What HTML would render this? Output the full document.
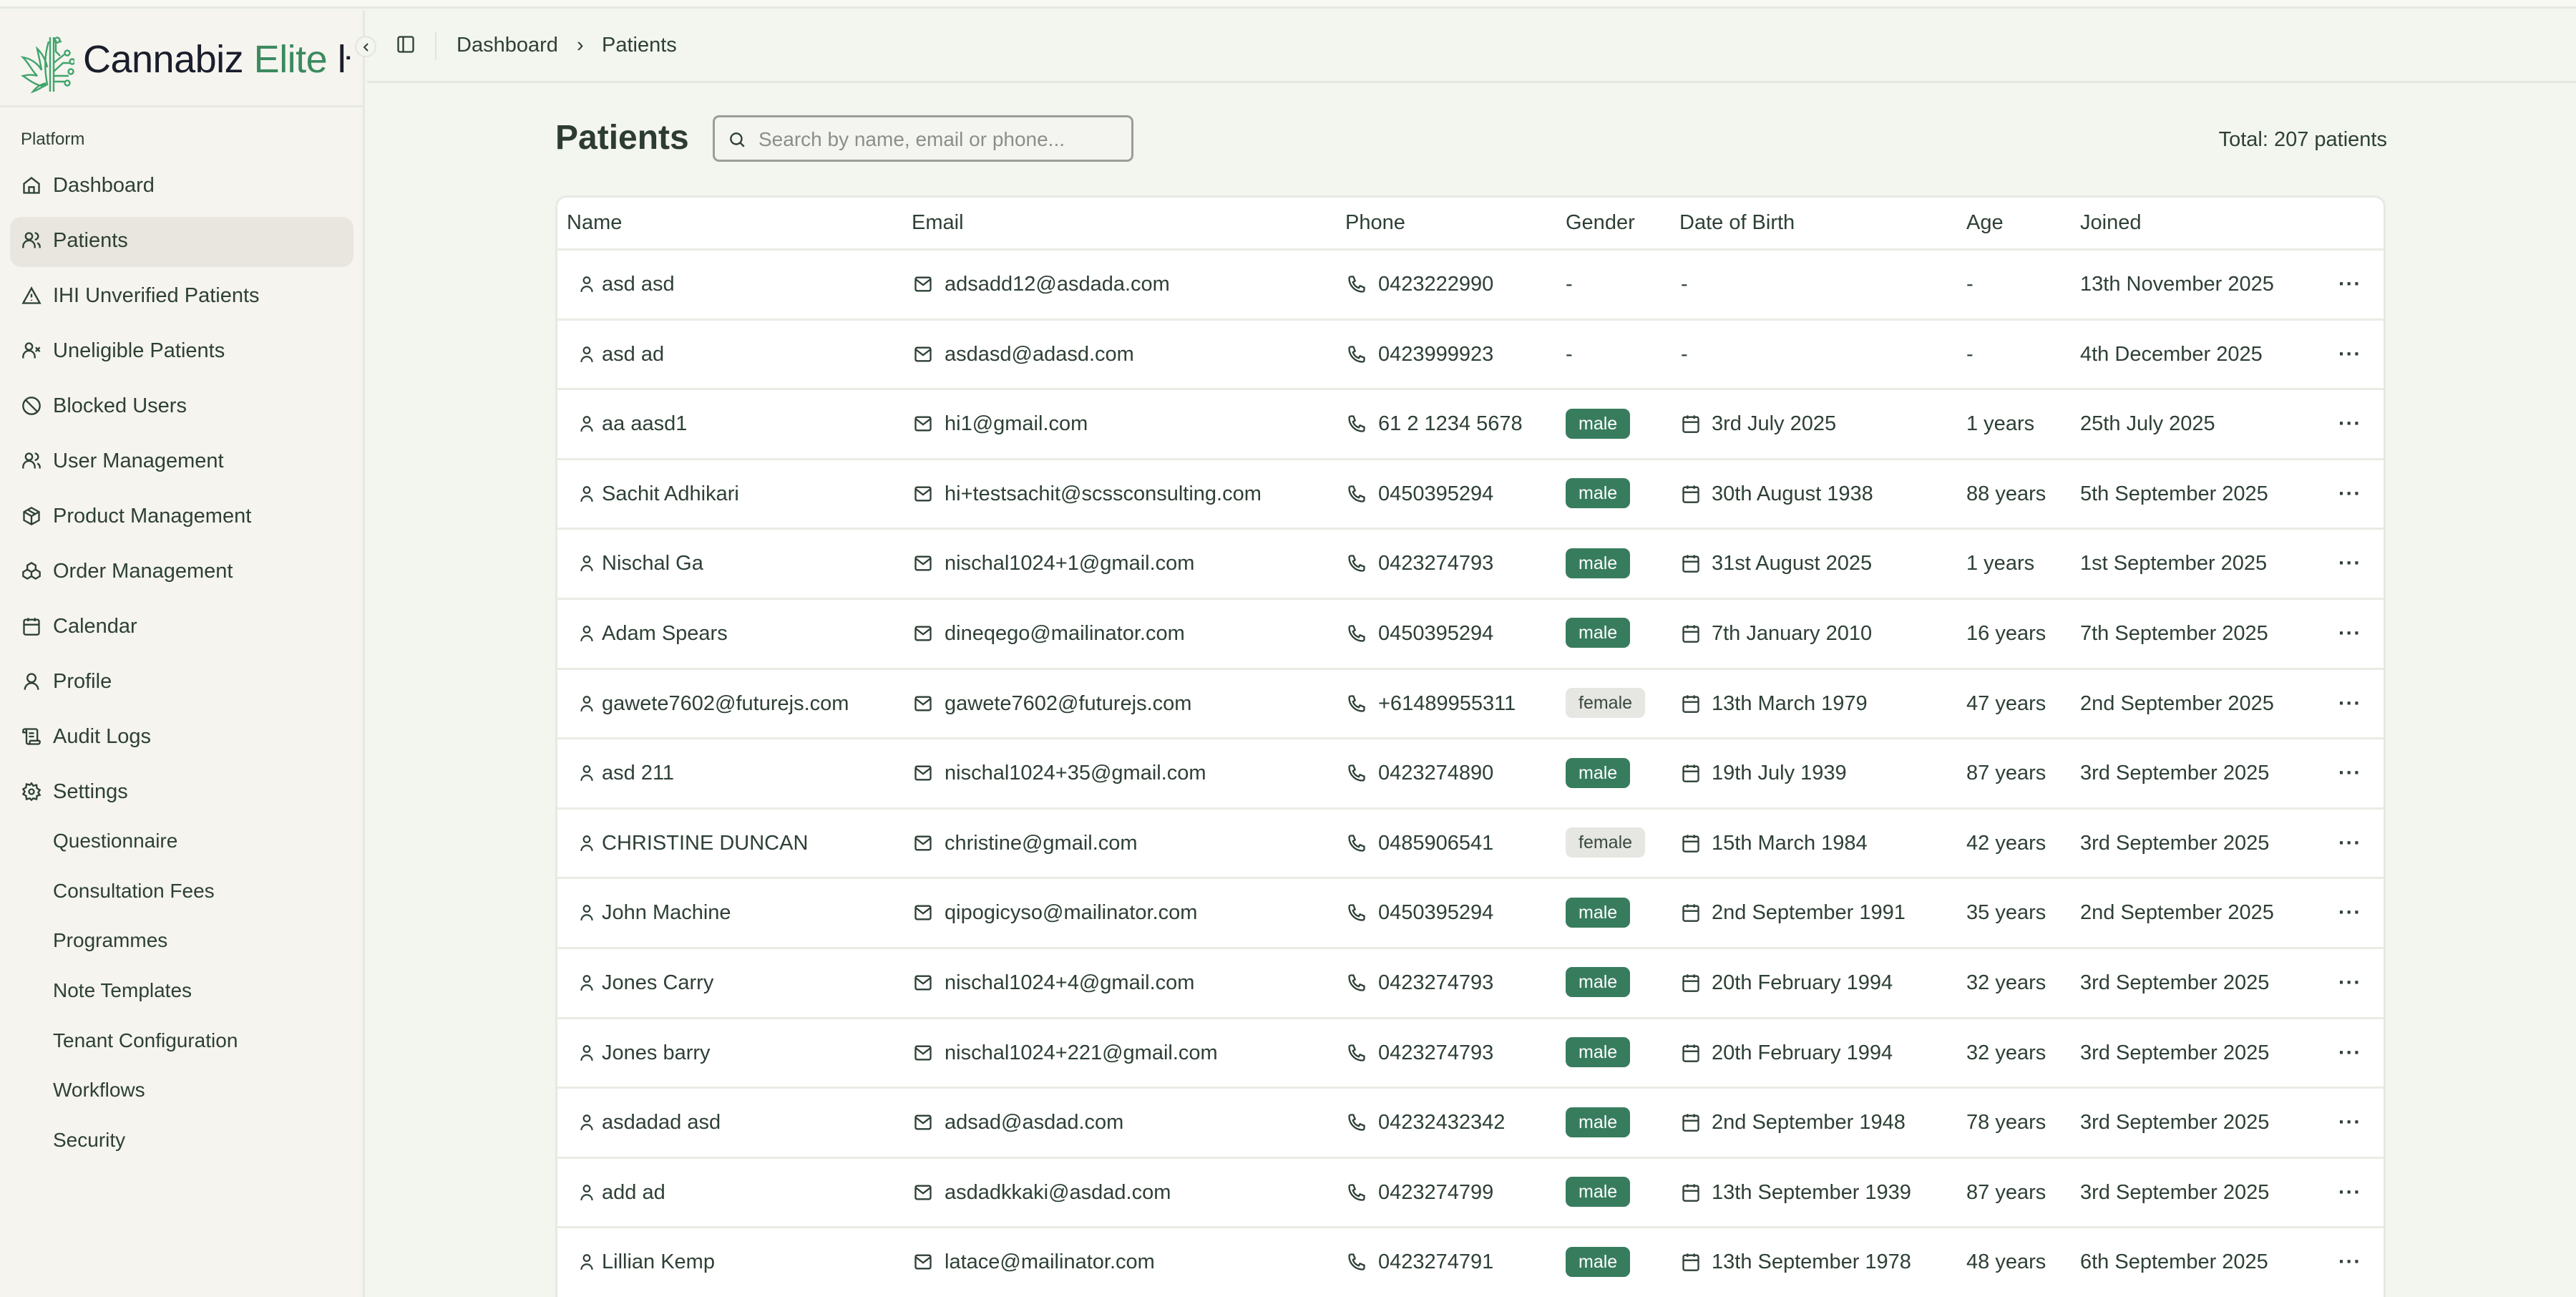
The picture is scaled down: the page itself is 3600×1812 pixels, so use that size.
<!DOCTYPE html>
<html><head><meta charset="utf-8">
<style>
*{box-sizing:border-box;margin:0;padding:0}
html,body{width:3600px;height:1812px;overflow:hidden}
body{background:#f3f5ef;font-family:"Liberation Sans",sans-serif;color:#2e4035;position:relative}
.topstrip{position:absolute;left:0;top:0;width:3600px;height:12px;background:#f7f8f2;border-bottom:3px solid #e6e8e1}
.side{position:absolute;left:0;top:14px;width:510px;height:1798px;background:#f5f4ef;border-right:3px solid #e7e8e2}
.logo{position:absolute;left:28px;top:34px}
.brand{position:absolute;left:116px;top:38px;font-size:54px;color:#1a1d2b;white-space:nowrap;letter-spacing:-0.5px}
.brand span{color:#3b8a5e}
.sdiv{position:absolute;left:0;top:133px;width:510px;height:3px;background:#e7e8e2}
.plat{position:absolute;left:29px;top:167px;font-size:24px}
.nav{position:absolute;left:0;width:510px;font-size:29px;height:66px;line-height:66px}
.nav svg{position:absolute;left:30px;top:19px}
.nav .t{position:absolute;left:74px}
.act{position:absolute;left:14px;top:289px;width:480px;height:70px;background:#e8e6de;border-radius:16px}
.sub{position:absolute;left:74px;font-size:28px}
.collapse{position:absolute;left:496px;top:50px;width:30px;height:30px;border-radius:50%;border:2px solid #e3e5de;background:#f5f5f0}
.hdr{position:absolute;left:513px;top:14px;width:3087px;height:102px;border-bottom:3px solid #e7e8e2}
.bc{position:absolute;top:33px;font-size:29px}
.title{position:absolute;left:776px;top:165px;font-size:48px;font-weight:bold;color:#2d3c32}
.search{position:absolute;left:996px;top:161px;width:588px;height:65px;border:3px solid #9a9d98;border-radius:9px;background:#f4f5f0}
.search span{position:absolute;left:61px;top:15px;font-size:28px;color:#8b8f8a}
.total{position:absolute;right:264px;top:179px;font-size:29px}
.tbl{position:absolute;left:776px;top:273px;width:2558px;height:1560px;background:#fff;border:3px solid #e8e9e3;border-radius:16px;overflow:hidden}
.row{position:absolute;left:0;width:2558px;height:97.6px;border-top:3px solid #ebebe6}
.c{position:absolute;top:0;height:97.6px;line-height:94px;font-size:29px;white-space:nowrap}
.c svg{position:absolute;top:33px;left:0}
.hd .c{line-height:70px}
.b{display:inline-block;height:42px;line-height:42px;padding:0 18px;border-radius:9px;font-size:25px;vertical-align:middle;margin-top:-4px}
.m{background:#387c5e;color:#fff}
.f{background:#e6e6e2;color:#3a4a40}
</style></head><body>
<div class="topstrip"></div>
<div class="side">
<svg class="logo" width="76" height="84" viewBox="0 0 76 84" fill="none" stroke="#41a46c" stroke-width="2.4">
<path d="M42 4 L42 80 M47 4 L47 80"/>
<path d="M40 10 C34 30 34 48 38 70 L30 72 C20 70 10 62 4 58 C12 56 18 56 24 58 C16 50 12 40 4 32 C16 34 26 42 30 50 C28 38 26 30 24 20 C32 28 36 36 38 46"/>
<path d="M38 70 C30 74 24 78 18 80 C24 72 30 70 36 68"/>
<path d="M50 8 V24 L56 30 M58 10 H54"/>
<circle cx="52" cy="8" r="3.5"/><circle cx="66" cy="26" r="3.5"/><circle cx="73" cy="38" r="3.5"/><circle cx="71" cy="52" r="3.5"/><circle cx="66" cy="68" r="3.5"/>
<path d="M47 40 L62 28 M47 52 L60 40 H70 M47 58 H68 M47 66 H62"/>
</svg>
<div class="brand">Cannabiz <span>Elite</span> <span style="color:#1a1d2b">ŀ</span></div>
<div class="sdiv"></div>
<div class="plat">Platform</div>
<div class="act"></div>
<div class="nav" style="top:212px"><svg width="28" height="28" viewBox="0 0 24 24" fill="none" stroke="#2e4035" stroke-width="2"><path d="M3 10 L12 3 L21 10 V21 H3 Z M9 21 V14 H15 V21"/></svg><span class="t">Dashboard</span></div>
<div class="nav" style="top:289px"><svg width="28" height="28" viewBox="0 0 24 24" fill="none" stroke="#2e4035" stroke-width="2"><circle cx="9" cy="7" r="4"/><path d="M2 21 V19 A5 5 0 0 1 16 19 V21 M16 3 A4 4 0 0 1 16 11 M22 21 V19 A5 5 0 0 0 19 15"/></svg><span class="t">Patients</span></div>
<div class="nav" style="top:366px"><svg width="28" height="28" viewBox="0 0 24 24" fill="none" stroke="#2e4035" stroke-width="2"><path d="M12 3 L22 21 H2 Z M12 10 V14 M12 17 V18"/></svg><span class="t">IHI Unverified Patients</span></div>
<div class="nav" style="top:443px"><svg width="28" height="28" viewBox="0 0 24 24" fill="none" stroke="#2e4035" stroke-width="2"><circle cx="9" cy="7" r="4"/><path d="M2 21 V19 A5 5 0 0 1 16 19 V21 M17 8 L22 13 M22 8 L17 13"/></svg><span class="t">Uneligible Patients</span></div>
<div class="nav" style="top:520px"><svg width="28" height="28" viewBox="0 0 24 24" fill="none" stroke="#2e4035" stroke-width="2"><circle cx="12" cy="12" r="10"/><path d="M5 5 L19 19"/></svg><span class="t">Blocked Users</span></div>
<div class="nav" style="top:597px"><svg width="28" height="28" viewBox="0 0 24 24" fill="none" stroke="#2e4035" stroke-width="2"><circle cx="9" cy="7" r="4"/><path d="M2 21 V19 A5 5 0 0 1 16 19 V21 M16 3 A4 4 0 0 1 16 11 M22 21 V19 A5 5 0 0 0 19 15"/></svg><span class="t">User Management</span></div>
<div class="nav" style="top:674px"><svg width="28" height="28" viewBox="0 0 24 24" fill="none" stroke="#2e4035" stroke-width="2"><path d="M12 2 L21 7 V17 L12 22 L3 17 V7 Z M3 7 L12 12 L21 7 M12 12 V22 M7.5 4.5 L16.5 9.5"/></svg><span class="t">Product Management</span></div>
<div class="nav" style="top:751px"><svg width="28" height="28" viewBox="0 0 24 24" fill="none" stroke="#2e4035" stroke-width="2"><path d="M12 2 L17 5 V10 L12 13 L7 10 V5 Z M7 10 L2 13 V18 L7 21 L12 18 V13 M17 10 L22 13 V18 L17 21 L12 18"/></svg><span class="t">Order Management</span></div>
<div class="nav" style="top:828px"><svg width="28" height="28" viewBox="0 0 24 24" fill="none" stroke="#2e4035" stroke-width="2"><rect x="3" y="4" width="18" height="18" rx="2"/><path d="M3 10 H21 M8 2 V6 M16 2 V6"/></svg><span class="t">Calendar</span></div>
<div class="nav" style="top:905px"><svg width="28" height="28" viewBox="0 0 24 24" fill="none" stroke="#2e4035" stroke-width="2"><circle cx="12" cy="8" r="5"/><path d="M4 22 A8 8 0 0 1 20 22"/></svg><span class="t">Profile</span></div>
<div class="nav" style="top:982px"><svg width="28" height="28" viewBox="0 0 24 24" fill="none" stroke="#2e4035" stroke-width="2"><path d="M15 12 H9 M15 8 H9 M19 17 V5 A2 2 0 0 0 17 3 H4 M8 21 H20 A2 2 0 0 0 22 19 V18 A1 1 0 0 0 21 17 H11 A1 1 0 0 0 10 18 V19 A2 2 0 1 1 6 19 V5 A2 2 0 1 0 2 5 V7 H6"/></svg><span class="t">Audit Logs</span></div>
<div class="nav" style="top:1059px"><svg width="28" height="28" viewBox="0 0 24 24" fill="none" stroke="#2e4035" stroke-width="2"><circle cx="12" cy="12" r="3"/><path d="M12 2 L14 5 L18 4 L18.5 8 L22 10 L20 13 L22 16 L18.5 17 L18 21 L14 20 L12 22 L10 20 L6 21 L5.5 17 L2 15 L4 12 L2 9 L5.5 7 L6 3 L10 4 Z"/></svg><span class="t">Settings</span></div>
<div class="sub" style="top:1145px">Questionnaire</div>
<div class="sub" style="top:1215px">Consultation Fees</div>
<div class="sub" style="top:1284px">Programmes</div>
<div class="sub" style="top:1354px">Note Templates</div>
<div class="sub" style="top:1424px">Tenant Configuration</div>
<div class="sub" style="top:1493px">Workflows</div>
<div class="sub" style="top:1563px">Security</div>
</div>
<div class="hdr">
<svg style="position:absolute;left:40px;top:34px" width="28" height="28" viewBox="0 0 24 24" fill="none" stroke="#2e4035" stroke-width="2"><rect x="3" y="3" width="18" height="18" rx="2"/><path d="M9 3 V21"/></svg>
<div style="position:absolute;left:95px;top:30px;width:2px;height:40px;background:#e2e4dd"></div>
<div class="bc" style="left:125px">Dashboard</div>
<div class="bc" style="left:293px">›</div>
<div class="bc" style="left:328px">Patients</div>
</div>
<div class="collapse"><svg style="position:absolute;left:7px;top:6px" width="14" height="16" viewBox="0 0 14 16" fill="none" stroke="#2e4035" stroke-width="2"><path d="M9 3 L4 8 L9 13"/></svg></div>
<div class="title">Patients</div>
<div class="search"><svg style="position:absolute;left:18px;top:18px" width="26" height="26" viewBox="0 0 24 24" fill="none" stroke="#2e4035" stroke-width="2.2"><circle cx="11" cy="11" r="7"/><path d="M16 16 L21 21"/></svg><span>Search by name, email or phone...</span></div>
<div class="total">Total: 207 patients</div>
<div class="tbl" id="t">
<div class="hd" style="position:absolute;top:0;height:74px;width:100%">
<div class="c" style="left:13px">Name</div><div class="c" style="left:495px">Email</div><div class="c" style="left:1101px">Phone</div><div class="c" style="left:1409px">Gender</div><div class="c" style="left:1568px">Date of Birth</div><div class="c" style="left:1969px">Age</div><div class="c" style="left:2128px">Joined</div>
</div>
</div>
<script>
var d=[["asd asd","adsadd12@asdada.com","0423222990","","-","-","13th November 2025"],
["asd ad","asdasd@adasd.com","0423999923","","-","-","4th December 2025"],
["aa aasd1","hi1@gmail.com","61 2 1234 5678","male","3rd July 2025","1 years","25th July 2025"],
["Sachit Adhikari","hi+testsachit@scssconsulting.com","0450395294","male","30th August 1938","88 years","5th September 2025"],
["Nischal Ga","nischal1024+1@gmail.com","0423274793","male","31st August 2025","1 years","1st September 2025"],
["Adam Spears","dineqego@mailinator.com","0450395294","male","7th January 2010","16 years","7th September 2025"],
["gawete7602@futurejs.com","gawete7602@futurejs.com","+61489955311","female","13th March 1979","47 years","2nd September 2025"],
["asd 211","nischal1024+35@gmail.com","0423274890","male","19th July 1939","87 years","3rd September 2025"],
["CHRISTINE DUNCAN","christine@gmail.com","0485906541","female","15th March 1984","42 years","3rd September 2025"],
["John Machine","qipogicyso@mailinator.com","0450395294","male","2nd September 1991","35 years","2nd September 2025"],
["Jones Carry","nischal1024+4@gmail.com","0423274793","male","20th February 1994","32 years","3rd September 2025"],
["Jones barry","nischal1024+221@gmail.com","0423274793","male","20th February 1994","32 years","3rd September 2025"],
["asdadad asd","adsad@asdad.com","04232432342","male","2nd September 1948","78 years","3rd September 2025"],
["add ad","asdadkkaki@asdad.com","0423274799","male","13th September 1939","87 years","3rd September 2025"],
["Lillian Kemp","latace@mailinator.com","0423274791","male","13th September 1978","48 years","6th September 2025"]];
var S='stroke="#2e4035" stroke-width="2" fill="none"';
var ip='<svg width="26" height="28" viewBox="0 0 24 24" '+S+'><circle cx="12" cy="7" r="4"/><path d="M5 22 A7 7 0 0 1 19 22"/></svg>';
var ie='<svg width="28" height="28" viewBox="0 0 24 24" '+S+'><rect x="3" y="4" width="18" height="16" rx="2"/><path d="M3 6 L12 13 L21 6"/></svg>';
var ih='<svg width="28" height="28" viewBox="0 0 24 24" '+S+'><path d="M5 3 H8 L10 8 L7.5 9.5 A11 11 0 0 0 14.5 16.5 L16 14 L21 16 V19 A2 2 0 0 1 19 21 A16 16 0 0 1 3 5 A2 2 0 0 1 5 3 Z"/></svg>';
var ic='<svg width="28" height="28" viewBox="0 0 24 24" '+S+'><rect x="3" y="4" width="18" height="18" rx="2"/><path d="M3 10 H21 M8 2 V6 M16 2 V6"/></svg>';
var h='';
d.forEach(function(r,i){
var g=r[3]?'<span class="b '+(r[3]=="male"?"m":"f")+'">'+r[3]+'</span>':'-';
var dob=r[3]?ic+'<span style="margin-left:43px">'+r[4]+'</span>':r[4];
h+='<div class="row" style="top:'+(71+i*97.6)+'px">'+
'<div class="c" style="left:28px">'+ip+'<span style="margin-left:34px">'+r[0]+'</span></div>'+
'<div class="c" style="left:497px">'+ie+'<span style="margin-left:44px">'+r[1]+'</span></div>'+
'<div class="c" style="left:1103px">'+ih+'<span style="margin-left:44px">'+r[2]+'</span></div>'+
'<div class="c" style="left:1409px">'+g+'</div>'+
'<div class="c" style="left:1570px">'+dob+'</div>'+
'<div class="c" style="left:1969px">'+r[5]+'</div>'+
'<div class="c" style="left:2128px">'+r[6]+'</div>'+
'<div class="c" style="left:2489px;font-weight:bold;letter-spacing:1px">···</div></div>';
});
document.getElementById('t').insertAdjacentHTML('beforeend',h);
</script>
</body></html>
